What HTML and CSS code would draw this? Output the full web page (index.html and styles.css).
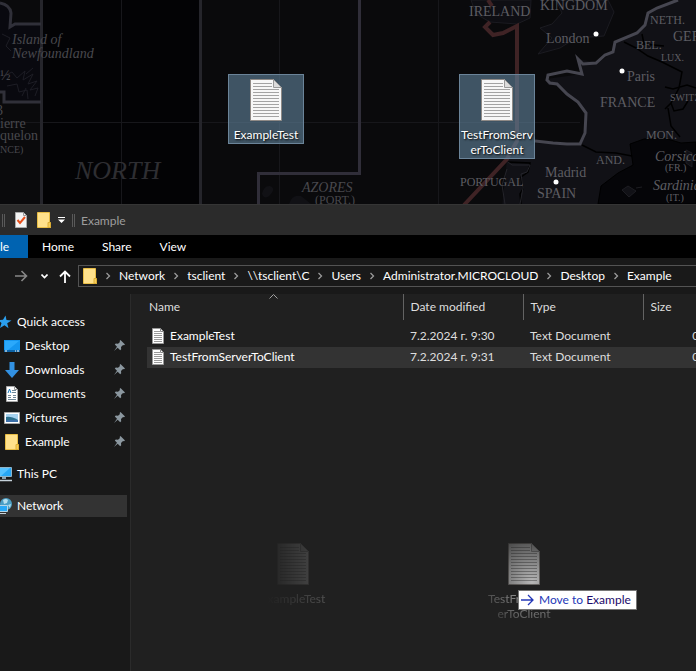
FILE: index.html
```html
<!DOCTYPE html>
<html lang="en">
  <head>
    <meta charset="utf-8">
    <title>Example</title>
    <link rel="stylesheet" href="styles.css">
  </head>
  <body>
    <svg class="defs" aria-hidden="true">
      <symbol id="i-paper" viewBox="0 0 32 42">
        <path d="M.5.5h23l8 8v33H.5z" fill="#f7f7f7" stroke="#8f8a86"/>
        <path d="M3 4.500h19M3 7.500h19M3 10.500h26M3 13.500h26M3 16.500h26M3 19.500h26M3 22.500h26M3 25.500h26M3 28.500h26M3 31.500h26M3 34.500h26M3 37.500h26" stroke="#a3a3a3"/>
        <path d="M23.500.5v8h8z" fill="#dcdcdc" stroke="#9a9a9a"/>
      </symbol>
      <symbol id="i-text" viewBox="0 0 12 16">
        <path d="M.5.5h8l3 3v12H.5z" fill="#fff" stroke="#999"/>
        <path d="M2 3.500h6M2 5.500h8M2 7.500h8M2 9.500h8M2 11.500h8M2 13.500h8" stroke="#999"/>
        <path d="M8.500.5v3h3" fill="none" stroke="#888"/>
      </symbol>
      <symbol id="i-folder" viewBox="0 0 14 16">
        <path d="M.5.5h12v10l1 .5v4.500H.5z" fill="#ffe18b" stroke="#e8bd45"/>
        <path d="M11 15.500v-5h2.500v5z" fill="#f6cd59" stroke="#dcae35"/>
      </symbol>
      <symbol id="i-pin" viewBox="0 0 11 11">
        <path d="M6.500 0 11 4.500l-1 .8-1-.3-2 2 .2 2.200-1 1L3.700 7.700 0 11l3-4.200L.8 4.500l1-1L4 3.800l2-1.900-.4-1z" fill="#8b979f"/>
      </symbol>
      <symbol id="i-next" viewBox="0 0 5 8">
        <path d="M1 1l3 3-3 3" fill="none" stroke="#9a9a9a" stroke-width="1.300"/>
      </symbol>
    </svg>

    <section class="desktop">
      <svg class="map" viewBox="0 0 696 204" preserveAspectRatio="xMidYMid slice" aria-hidden="true">
        <rect width="696" height="204" fill="#0a0a0c"/>
        <rect x="42" width="158" height="204" fill="#030305"/>
        <!-- land -->
        <path d="M0 3q10 2 11 10l-1 14 5-3h26v78H4V92H0z" fill="#09090f"/>
        <path d="M696 0h-18l-21 8-9 5-3 12-8 8-22 9-2 10-15 11-20-4 4 15-36 5 2 6h9l11 12 10 7 8 11-1 20-5 11-45-3-28 17-5 47h160l3-18 30-12h60z" fill="#111116"/>
        <path d="M540 28l12-4 10-11-6-13h52l6 12-10 24-28 2-16 10-22 6 14-16z" fill="#0e0e13" stroke="#1b1b21"/>
        <path d="M471 0h60l-1 18-13 6-27-2-14-8z" fill="#0e0e13" stroke="#1b1b21"/>
        <path d="M630 144l14-5 20-1 17 5 15-1v62h-98l3-18 17-13 15-8z" fill="#050508" stroke="#000"/>
        <path d="M622 190l6-4 8 5-7 6zM636 188l6-1M686 150l6 3v14l-6-4z" fill="#111116" stroke="#1d1d22"/>
        <!-- grid -->
        <path d="M121.500 0v204M279.500 0v204M438.500 0v204M0 122.500h580" stroke="#17171b"/>
        <path d="M41.500 0v204M200.500 0v204" stroke="#25252b" stroke-width="3"/>
        <path d="M359.500 0v173.500H258.500V204" fill="none" stroke="#302e39" stroke-width="3"/>
        <path d="M0 3q10 2 11 10l-1 14 5-3h26M0 92h4v10h37" fill="none" stroke="#303039" stroke-width="3"/>
        <path d="M4 76l8-4 5 6 8-7-2 9 10-6-5 10 9-3-7 9 8-2-3 8M7 86l10-2 2 8 8-2 1 9M2 34l8 4-4 8 5 5M26 74l7-6M22 96l4-8" fill="none" stroke="#1d1d25"/>
        <path d="M262 194q2-9 8-8 6 2 1 8-6 7-9 0zM289 204q3-10 12-8l10 8z" fill="#111115"/>
        <!-- borders -->
        <path d="M624 42l12 6 12 8 14 6 20 10-3 16-8 15-6 6M642 34l2 10 20 2M665 87l8 2 14-4 9 3M671 103l3 8 9-2 5-8M582 145l14 7 20 1 16 3M508 162l22 1-2 9-7 5 2 12-3 5 1 10M668 108l3 18 9 11" fill="none" stroke="#000" stroke-width="1.500"/>
        <path d="M508 162l4 3h18l-3 7-6 2 2 14-3 16M507 169l-5 16 3 19" fill="none" stroke="#24242a"/>
        <path d="M490 22l-5 5 8 8 10-2 14-7v115l-10 18-43 46M488 0l4 6" fill="none" stroke="#3f2325" stroke-width="4"/>
        <path d="M678 0l-21 8-9 5-3 12-8 8-22 9-2 10-8 3-9 8-13 1-5-5 4 15-15-3-19 4-1 5 3 3 7 1 10 10 11 8 8 11-1 20-5 11h-13l-14-1-18-2" fill="none" stroke="#464650" stroke-width="3"/>
        <!-- places -->
        <g class="place dim">
          <text class="it" x="12" y="44">Island of</text>
          <text class="it" x="12" y="58">Newfoundland</text>
          <text x="0" y="80">½</text>
          <text x="-4" y="115">3</text>
          <text x="0" y="128">ierre</text>
          <text x="0" y="140">quelon</text>
          <text class="xs" x="0" y="153">NCE)</text>
          <text class="sea" x="75" y="179">NORTH</text>
          <text class="it" x="302" y="192">AZORES</text>
          <text class="sm" x="315" y="204">(PORT.)</text>
        </g>
        <g class="place">
          <text x="469" y="16">IRELAND</text>
          <text x="540" y="10">KINGDOM</text>
          <text x="546" y="43">London</text>
          <text class="sm" x="650" y="24">NETH.</text>
          <text class="sm" x="636" y="49">BEL.</text>
          <text x="673" y="41">GERMANY</text>
          <text class="xs" x="661" y="61">LUX.</text>
          <text x="627" y="81">Paris</text>
          <text x="600" y="107">FRANCE</text>
          <text class="xs" x="670" y="101">SWITZ.</text>
          <text class="sm" x="646" y="139">MON.</text>
          <text class="sm" x="596" y="164">AND.</text>
          <text class="it" x="655" y="161">Corsica</text>
          <text class="xs" x="665" y="171">(FR.)</text>
          <text class="it" x="653" y="190">Sardinia</text>
          <text class="xs" x="666" y="201">(IT.)</text>
          <text x="545" y="177">Madrid</text>
          <text x="537" y="198">SPAIN</text>
          <text class="sm" x="460" y="186">PORTUGAL</text>
        </g>
        <g fill="#fff">
          <circle cx="596" cy="34" r="2.500"/>
          <circle cx="622" cy="71" r="2.500"/>
          <circle cx="556" cy="182" r="2.500"/>
        </g>
      </svg>
      <div class="shortcuts">
        <div class="shortcut selected">
          <svg class="paper"><use href="#i-paper"/></svg>
          <span>ExampleTest</span>
        </div>
        <div class="shortcut selected">
          <svg class="paper"><use href="#i-paper"/></svg>
          <span>TestFromServ<br>erToClient</span>
        </div>
      </div>
    </section>

    <section class="window">
      <header class="titlebar">
        <i class="sep"></i>
        <button class="props" aria-label="Properties">
          <svg width="12" height="16" viewBox="0 0 12 16"><path d="M.5.5h8l3 3v12H.5z" fill="#f4f4f4" stroke="#aaa"/><path d="M8.500.5v3h3" fill="none" stroke="#999"/><path d="M2.500 8l2.500 3 5-6" fill="none" stroke="#e8501c" stroke-width="2"/></svg>
        </button>
        <button class="newdir" aria-label="New folder"><svg width="14" height="16"><use href="#i-folder"/></svg></button>
        <button class="custom" aria-label="Customize toolbar">
          <svg width="7" height="6" viewBox="0 0 7 6"><path d="M0 0h7v1H0zM0 2.500h7L3.500 6z" fill="#fff"/></svg>
        </button>
        <i class="sep"></i>
        <span class="title">Example</span>
      </header>

      <nav class="ribbon">
        <button class="file">le</button>
        <button>Home</button>
        <button>Share</button>
        <button>View</button>
      </nav>

      <div class="navbar">
        <button class="forward" aria-label="Forward"><svg width="13" height="12" viewBox="0 0 13 12"><path d="M0 6h11.500M6.500 1l5 5-5 5" fill="none" stroke="#888" stroke-width="1.600"/></svg></button>
        <button class="recent" aria-label="Recent locations"><svg width="7" height="5" viewBox="0 0 7 5"><path d="M.5.5l3 3 3-3" fill="none" stroke="#fff" stroke-width="1.600"/></svg></button>
        <button class="up" aria-label="Up"><svg width="12" height="13" viewBox="0 0 12 13"><path d="M6 13V1.500M1 6.500l5-5 5 5" fill="none" stroke="#fff" stroke-width="1.800"/></svg></button>
        <div class="address">
          <svg class="dir" width="14" height="16"><use href="#i-folder"/></svg>
          <svg class="next"><use href="#i-next"/></svg>
          <a href="#">Network</a>
          <svg class="next"><use href="#i-next"/></svg>
          <a href="#">tsclient</a>
          <svg class="next"><use href="#i-next"/></svg>
          <a href="#">\\tsclient\C</a>
          <svg class="next"><use href="#i-next"/></svg>
          <a href="#">Users</a>
          <svg class="next"><use href="#i-next"/></svg>
          <a href="#">Administrator.MICROCLOUD</a>
          <svg class="next"><use href="#i-next"/></svg>
          <a href="#">Desktop</a>
          <svg class="next"><use href="#i-next"/></svg>
          <a href="#">Example</a>
        </div>
      </div>

      <div class="panes">
        <nav class="sidebar">
          <div class="group">
            <a class="root" href="#">
              <svg viewBox="0 0 16 16"><path d="M9.500 1.500l1 4.500 5 .5-4.300 2.700 1.300 5-4-3-4.500 2.800 1.500-5L2 6l5-.3z" fill="#2b9fee"/></svg>
              Quick access
            </a>
            <a href="#">
              <svg viewBox="0 0 16 16"><path d="M0 2h16v12H0z" fill="#1596ef"/><path d="M1 3h14L4 12H1z" fill="#2ba9fb"/><path d="M0 12h16v2H0z" fill="#0c64a8"/><path d="M1 13h2M11 13h1M13 13h2" stroke="#fff"/></svg>
              Desktop
              <svg class="pin"><use href="#i-pin"/></svg>
            </a>
            <a href="#">
              <svg viewBox="0 0 16 16"><path d="M5.500 0h5v8H15l-7 8-7-8h4.500z" fill="#3291e2"/></svg>
              Downloads
              <svg class="pin"><use href="#i-pin"/></svg>
            </a>
            <a href="#">
              <svg viewBox="0 0 16 16"><path d="M2.500.5h8l3 3v12h-11z" fill="#fff" stroke="#aaa"/><path d="M8 4.500h4M8 6.500h4M4 9.500h3M4 11.500h3M4 13.500h8M9 9.500h3M9 11.500h3" stroke="#6f8797"/><path d="M4 7l1.500-4L7 7" fill="none" stroke="#2583c5"/><path d="M10.500.5v3h3" fill="none" stroke="#999"/></svg>
              Documents
              <svg class="pin"><use href="#i-pin"/></svg>
            </a>
            <a href="#">
              <svg viewBox="0 0 16 16"><path d="M.5 2.500h15v11H.5z" fill="#fff" stroke="#aaa"/><path d="M2 4h12v8H2z" fill="#a6d2ef"/><path d="M2 7q5-1 12 3v2H2z" fill="#2c6f8c"/><path d="M2 10h12v2H2z" fill="#3c6fa8"/></svg>
              Pictures
              <svg class="pin"><use href="#i-pin"/></svg>
            </a>
            <a href="#">
              <svg viewBox="-1 0 16 16"><use href="#i-folder" width="14" height="16"/></svg>
              Example
              <svg class="pin"><use href="#i-pin"/></svg>
            </a>
          </div>
          <a class="root" href="#">
            <svg viewBox="0 0 16 16"><path d="M1.500 1.500h14v9h-14z" fill="#27a7f5" stroke="#8fb4c8"/><path d="M2 2h12L5 10H2z" fill="#55c2ff"/><path d="M6 11h4v2H6z" fill="#8ba4b3"/><path d="M3 14.500h13" stroke="#c6d2da" stroke-width="1.500"/></svg>
            This PC
          </a>
          <a class="root current" href="#">
            <svg viewBox="0 0 16 16"><circle cx="10" cy="6" r="6" fill="#4b9ec4"/><path d="M7 2q3-2 5 0l-1 3-3 1zM12 7l3-1-1 4z" fill="#b7e0ee"/><path d="M1.500 7.500h10v6h-10z" fill="#29a9f6" stroke="#b4d5e6"/><path d="M3 15.500h7" stroke="#c6d2da"/></svg>
            Network
          </a>
        </nav>

        <main class="files">
          <table>
            <colgroup><col class="c-name"><col class="c-date"><col class="c-type"><col class="c-size"></colgroup>
            <thead>
              <tr>
                <th>Name <svg class="sort" viewBox="0 0 9 5"><path d="M.5 4.500l4-4 4 4" fill="none" stroke="#a0a0a0"/></svg></th>
                <th>Date modified</th>
                <th>Type</th>
                <th>Size</th>
              </tr>
            </thead>
            <tbody>
              <tr>
                <td><svg class="txt"><use href="#i-text"/></svg>ExampleTest</td>
                <td>7.2.2024 г. 9:30</td>
                <td>Text Document</td>
                <td>0 KB</td>
              </tr>
              <tr class="hover">
                <td><svg class="txt"><use href="#i-text"/></svg>TestFromServerToClient</td>
                <td>7.2.2024 г. 9:31</td>
                <td>Text Document</td>
                <td>0 KB</td>
              </tr>
            </tbody>
          </table>

          <!-- dragged items and drop hint -->
          <div class="drag">
            <div class="shortcut ghost far">
              <svg class="paper"><use href="#i-paper"/></svg>
              <span>ExampleTest</span>
            </div>
            <div class="shortcut ghost near">
              <svg class="paper"><use href="#i-paper"/></svg>
              <span>TestFromServ<br>erToClient</span>
            </div>
          </div>
          <div class="hint">
            <svg width="13" height="12" viewBox="0 0 13 12"><path d="M0 6h12M7 1l5 5-5 5" fill="none" stroke="#2438b8" stroke-width="1.300"/></svg>
            <span>Move to <b>Example</b></span>
          </div>
        </main>
      </div>
    </section>
  </body>
</html>
```
FILE: styles.css
```css
*{
  box-sizing: border-box;
}
body{
  margin: 0;
  min-height: 100vh;
  display: flex;
  flex-direction: column;
  overflow: hidden;
  background: #191919;
  color: #fff;
  font: 12px/15px Lato, "Open Sans", sans-serif;
}
button{
  border: none;
  background: none;
  padding: 0;
  color: inherit;
  font: inherit;
}
a{
  color: inherit;
  text-decoration: none;
}
svg{
  display: block;
  flex: none;
}
.defs{
  position: absolute;
  width: 0;
  height: 0;
}

/* desktop */
.desktop{
  position: relative;
  height: 204px;
}
.map{
  position: absolute;
  width: 100%;
  height: 100%;
}
.place{
  font-family: "Liberation Serif", serif;
  font-size: 14px;
  fill: #5d5d62;
}
.place.dim{
  fill: #48484d;
}
.place .it{
  font-style: italic;
}
.place .sm{
  font-size: 12px;
}
.place .xs{
  font-size: 10px;
}
.place .sea{
  font-size: 26px;
  font-style: italic;
  fill: #2e2e32;
}
.shortcuts{
  position: relative;
  display: flex;
  align-items: flex-start;
  gap: 155px;
  padding: 74px 0 0 228px;
}
.shortcut{
  width: 76px;
  padding: 4px 0 1px;
  border: 1px solid transparent;
  display: flex;
  flex-direction: column;
  align-items: center;
  gap: 6px;
  text-align: center;
  white-space: nowrap;
  text-shadow: 1px 1px 2px #000;
}
.selected{
  background: rgba(98, 133, 160, .6);
  border-color: #6b8499;
}
.paper{
  width: 32px;
  height: 42px;
}

/* explorer window */
.window{
  flex: 1;
  display: flex;
  flex-direction: column;
  border-top: 1px solid #353535;
}
.titlebar{
  height: 30px;
  display: flex;
  align-items: center;
  padding-left: 2px;
  background: #2b2b2b;
}
.sep{
  width: 3px;
  height: 13px;
  border: solid #5a5a5a;
  border-width: 0 1px;
}
.props{
  margin-left: 10px;
}
.newdir{
  margin-left: 10px;
}
.custom{
  margin: 0 7px;
}
.title{
  margin-left: 6px;
  color: #9d9d9d;
}
.ribbon{
  height: 23px;
  display: flex;
  background: #000;
}
.ribbon button{
  padding: 0 14px;
}
.ribbon .file{
  width: 28px;
  padding: 0;
  text-align: left;
  background: #0063b1;
}
.navbar{
  display: flex;
  align-items: center;
  height: 36px;
  padding-left: 15px;
}
.recent{
  margin-left: 13px;
}
.up{
  margin-left: 11px;
}
.address{
  flex: 1;
  height: 22px;
  margin-left: 7px;
  padding: 0 0 1px 4px;
  display: flex;
  align-items: center;
  gap: 8px;
  border: 1px solid #535353;
  border-right: none;
  white-space: nowrap;
  overflow: hidden;
}
.next{
  width: 6px;
  height: 8px;
}

.panes{
  flex: 1;
  display: flex;
}
.sidebar{
  width: 131px;
  padding: 17px 3px 0 0;
  display: flex;
  flex-direction: column;
  gap: 10px;
  border-right: 1px solid #2b2b2b;
}
.group{
  display: flex;
  flex-direction: column;
  gap: 2px;
}
.sidebar a{
  height: 22px;
  padding: 0 0 1px 4px;
  display: flex;
  align-items: center;
  gap: 5px;
}
.sidebar svg{
  width: 16px;
  height: 16px;
}
.sidebar .root{
  padding-left: 0;
}
.root svg{
  margin-left: -4px;
}
.sidebar .pin{
  width: 11px;
  height: 11px;
  margin-left: auto;
  margin-right: 2px;
}
.current{
  background: #333;
}

.files{
  position: relative;
  flex: 1;
  min-width: 0;
  padding-left: 16px;
  overflow: hidden;
  background: #202020;
}
table{
  width: 576px;
  table-layout: fixed;
  border-collapse: collapse;
}
.c-name{
  width: 256px;
}
.c-date, .c-type{
  width: 120px;
}
.c-size{
  width: 80px;
}
th{
  position: relative;
  height: 26px;
  padding: 0 0 2px 7px;
  border-right: 1px solid #636363;
  color: #dedede;
  font-weight: normal;
  text-align: left;
}
th:first-child{
  padding-left: 2px;
}
.sort{
  position: absolute;
  top: 0;
  left: 122px;
  width: 9px;
  height: 5px;
}
tbody::before{
  content: "";
  display: block;
  height: 6px;
}
td{
  height: 21px;
  padding: 0 0 2px 7px;
  color: #dedede;
  white-space: nowrap;
}
td:first-child{
  padding-left: 5px;
  color: #fff;
}
td:last-child{
  padding-right: 5px;
  text-align: right;
}
.txt{
  float: left;
  width: 12px;
  height: 16px;
  margin-right: 6px;
}
.hover{
  background: #333;
}

.drag{
  position: absolute;
  top: 244px;
  left: 124px;
  display: flex;
  gap: 155px;
}
.ghost{
  text-shadow: none;
}
.far{
  opacity: .2;
  -webkit-mask-image: linear-gradient(to right, transparent 15%, #000 90%);
  mask-image: linear-gradient(to right, transparent 15%, #000 90%);
}
.near{
  opacity: .7;
  -webkit-mask-image: radial-gradient(circle at 46px 44px, #000, rgba(0, 0, 0, .2) 50px);
  mask-image: radial-gradient(circle at 46px 44px, #000, rgba(0, 0, 0, .2) 50px);
}
.hint{
  position: absolute;
  top: 296px;
  left: 387px;
  height: 20px;
  padding: 0 5px 1px 2px;
  display: flex;
  align-items: center;
  gap: 5px;
  border: 1px solid #767676;
  background: #fff;
  color: #2438b8;
  white-space: nowrap;
}
.hint b{
  color: #1b0a6b;
  font-weight: normal;
}
```
